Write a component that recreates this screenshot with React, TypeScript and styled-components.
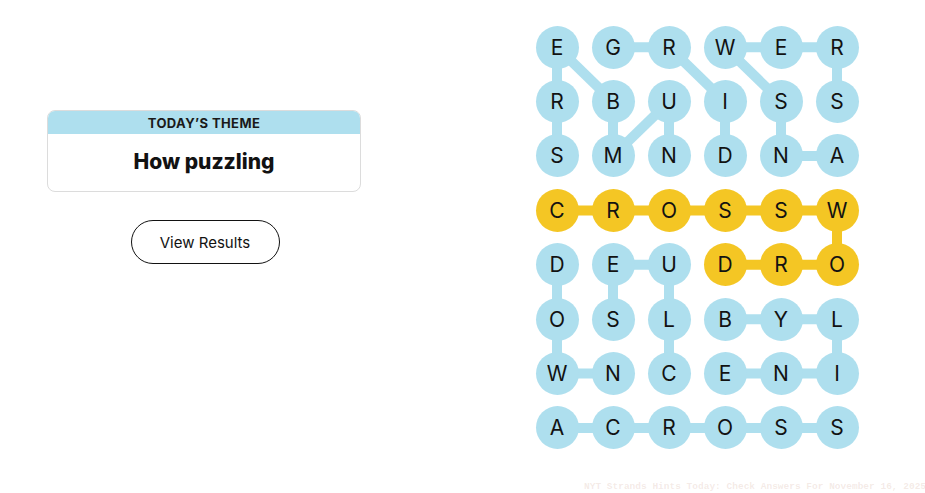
import styled, { createGlobalStyle } from "styled-components";

const GlobalStyle = createGlobalStyle`
  html, body {
    margin: 0;
    padding: 0;
    background: #ffffff;
    font-family: Inter, "Liberation Sans", Arial, sans-serif;
    color: #121212;
  }
`;

const BLUE = "#aedfee";
const YELLOW = "#f4c624";
const COL_W = 56;
const ROW_H = 54.4;
const DOT = 43;

const letters = [
  "EGRWER",
  "RBUISS",
  "SMNDNA",
  "CROSSW",
  "DEUDRO",
  "OSLBYL",
  "WNCENI",
  "ACROSS",
];

const spangram = new Set(["3-0", "3-1", "3-2", "3-3", "3-4", "3-5", "4-5", "4-4", "4-3"]);

// [row, col, row, col, spangram?]
const links: [number, number, number, number, boolean?][] = [
  [0, 0, 1, 0],
  [1, 0, 2, 0],
  [0, 0, 1, 1],
  [0, 1, 0, 2],
  [0, 2, 1, 3],
  [0, 3, 0, 4],
  [0, 4, 0, 5],
  [0, 3, 1, 4],
  [0, 5, 1, 5],
  [1, 1, 2, 1],
  [1, 2, 2, 1],
  [1, 2, 2, 2],
  [1, 3, 2, 3],
  [1, 4, 2, 4],
  [2, 4, 2, 5],
  [3, 0, 3, 1, true],
  [3, 1, 3, 2, true],
  [3, 2, 3, 3, true],
  [3, 3, 3, 4, true],
  [3, 4, 3, 5, true],
  [3, 5, 4, 5, true],
  [4, 5, 4, 4, true],
  [4, 4, 4, 3, true],
  [4, 0, 5, 0],
  [4, 1, 4, 2],
  [4, 1, 5, 1],
  [4, 2, 5, 2],
  [5, 3, 5, 4],
  [5, 4, 5, 5],
  [5, 0, 6, 0],
  [5, 2, 6, 2],
  [5, 5, 6, 5],
  [6, 0, 6, 1],
  [6, 3, 6, 4],
  [6, 4, 6, 5],
  [7, 0, 7, 1],
  [7, 1, 7, 2],
  [7, 2, 7, 3],
  [7, 3, 7, 4],
  [7, 4, 7, 5],
];

const Page = styled.div`
  display: flex;
  align-items: flex-start;
  width: 925px;
  height: 493px;
  box-sizing: border-box;
  padding: 20px 0 0 47px;
  gap: 168px;
  position: relative;
  overflow: hidden;
`;

const Side = styled.div`
  width: 314px;
  margin-top: 90px;
  display: flex;
  flex-direction: column;
  align-items: center;
`;

const ThemeCard = styled.div`
  width: 100%;
  border: 1px solid #dcdcdc;
  border-radius: 8px;
  overflow: hidden;
  box-sizing: border-box;
`;

const ThemeHead = styled.div`
  background: ${BLUE};
  height: 23px;
  display: flex;
  align-items: center;
  justify-content: center;
  font-size: 13px;
  font-weight: 700;
  letter-spacing: 0.4px;
  color: #1a1a1a;
`;

const ThemeBody = styled.div`
  height: 57px;
  display: flex;
  align-items: center;
  justify-content: center;
  font-size: 21px;
  font-weight: 800;
  color: #121212;
  padding-bottom: 2px;
  box-sizing: border-box;
`;

const ResultsButton = styled.button`
  margin-top: 28px;
  margin-left: 2px;
  width: 149px;
  height: 44px;
  border: 1px solid #121212;
  border-radius: 22px;
  background: #fff;
  font-family: inherit;
  font-size: 15px;
  color: #121212;
  cursor: pointer;
`;

const Board = styled.div`
  position: relative;
  display: grid;
  grid-template-columns: repeat(6, ${COL_W}px);
  grid-auto-rows: ${ROW_H}px;
`;

const Links = styled.svg`
  position: absolute;
  left: 0;
  top: 0;
  pointer-events: none;
`;

const Cell = styled.div`
  position: relative;
  display: flex;
  align-items: center;
  justify-content: center;
`;

const Dot = styled.div<{ $gold: boolean }>`
  width: ${DOT}px;
  height: ${DOT}px;
  border-radius: 50%;
  background: ${(p) => (p.$gold ? YELLOW : BLUE)};
  display: flex;
  align-items: center;
  justify-content: center;
  font-size: 21px;
  font-weight: 400;
  color: #121212;
`;

const Stamp = styled.div`
  position: absolute;
  left: 584px;
  bottom: 1px;
  white-space: nowrap;
  font-family: "Liberation Mono", "DejaVu Sans Mono", monospace;
  font-size: 9.5px;
  font-weight: 700;
  color: rgba(200, 150, 130, 0.2);
`;

const cx = (c: number) => c * COL_W + COL_W / 2;
const cy = (r: number) => r * ROW_H + ROW_H / 2;

export default function App() {
  return (
    <>
      <GlobalStyle />
      <Page>
        <Side>
          <ThemeCard>
            <ThemeHead>TODAY’S THEME</ThemeHead>
            <ThemeBody>How puzzling</ThemeBody>
          </ThemeCard>
          <ResultsButton>View Results</ResultsButton>
        </Side>
        <Board>
          <Links width={COL_W * 6} height={ROW_H * 8}>
            {links.map(([r1, c1, r2, c2, gold], i) => (
              <line
                key={i}
                x1={cx(c1)}
                y1={cy(r1)}
                x2={cx(c2)}
                y2={cy(r2)}
                stroke={gold ? YELLOW : BLUE}
                strokeWidth={10}
              />
            ))}
          </Links>
          {letters.map((row, r) =>
            row.split("").map((ch, c) => (
              <Cell key={`${r}-${c}`}>
                <Dot $gold={spangram.has(`${r}-${c}`)}>{ch}</Dot>
              </Cell>
            ))
          )}
        </Board>
        <Stamp>NYT Strands Hints Today: Check Answers For November 16, 2025</Stamp>
      </Page>
    </>
  );
}
